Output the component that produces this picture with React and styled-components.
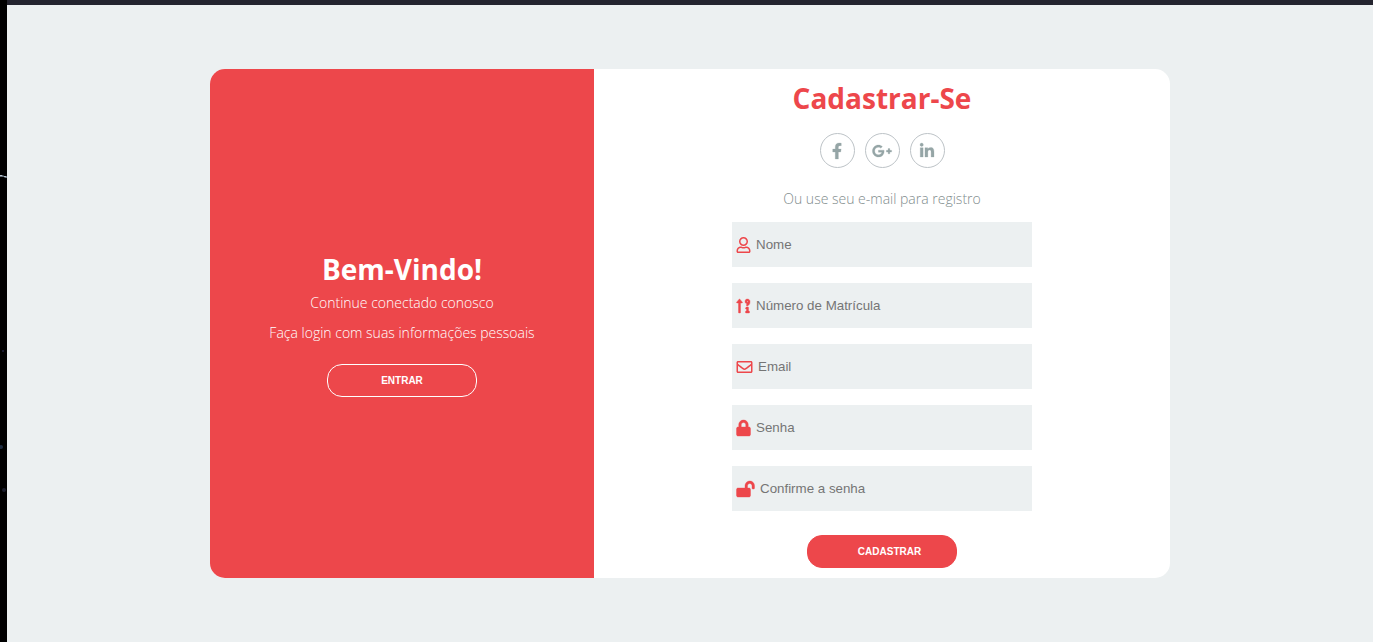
import React from "react";
import styled, { createGlobalStyle } from "styled-components";
import {
  FaFacebookF,
  FaGooglePlusG,
  FaLinkedinIn,
  FaRegUser,
  FaSortNumericUpAlt,
  FaRegEnvelope,
  FaLock,
  FaLockOpen,
} from "react-icons/fa";

const red = "#ed474b";
const mist = "#ecf0f1";

const GlobalStyle = createGlobalStyle`
  * { box-sizing: border-box; margin: 0; padding: 0; }
  body {
    background: #000;
    font-family: "Open Sans", sans-serif;
  }
`;

const Desktop = styled.div`
  display: flex;
  min-height: 100vh;
`;

const Backdrop = styled.svg`
  flex: none;
  width: 7px;
  height: 100vh;
`;

const Page = styled.main`
  flex: 1;
  display: flex;
  align-items: center;
  justify-content: center;
  border-top: 5px solid #24242f;
  background: ${mist};
`;

const Card = styled.div`
  display: flex;
  width: 100%;
  max-width: 960px;
  overflow: hidden;
  border-radius: 15px;
  background: #fff;
`;

const Column = styled.section`
  display: flex;
  flex-direction: column;
  align-items: center;
  justify-content: center;
  padding: 10px 0;
`;

const WelcomeColumn = styled(Column)`
  width: 40%;
  background: ${red};
`;

const FormColumn = styled(Column)`
  width: 60%;
`;

const Title = styled.h2`
  color: ${(p) => p.$color};
  font-size: 28px;
  font-weight: 700;
  line-height: 38px;
`;

const Description = styled.p`
  color: ${(p) => p.$color};
  font-size: 14px;
  font-weight: 300;
  line-height: 30px;
`;

const SocialList = styled.ul`
  display: flex;
  gap: 10px;
  margin: 16px 0;
  list-style: none;
`;

const SocialLink = styled.a`
  display: flex;
  align-items: center;
  justify-content: center;
  width: 35px;
  height: 35px;
  border: 1px solid #bdc3c7;
  border-radius: 50%;
  color: #95a5a6;
  font-size: 16px;

  svg {
    flex: none;
    width: ${(p) => p.$iconWidth}px;
    overflow: visible;
    stroke-width: 8;
  }
`;

const Form = styled.form`
  display: flex;
  flex-direction: column;
  align-items: center;
  gap: 16px;
  width: 100%;
  max-width: 300px;
  margin-top: 8px;
`;

const Field = styled.label`
  display: flex;
  align-items: center;
  gap: 5px;
  width: 100%;
  height: 45px;
  padding-left: 4px;
  background: ${mist};
  color: ${red};
  font-size: 16px;

  svg {
    flex: none;
    width: ${(p) => p.$iconWidth}px;
    overflow: visible;
    stroke-width: ${(p) => p.$stroke};
  }
`;

const Input = styled.input`
  flex: 1;
  min-width: 0;
  height: 45px;
  border: 0;
  outline: 0;
  background: transparent;
  font-family: "Liberation Sans", Arial, sans-serif;

  &::placeholder { color: #757575; }
`;

const Button = styled.button`
  width: 150px;
  height: 33px;
  border: 1px solid ${(p) => (p.$outlined ? "#fff" : red)};
  border-radius: 15px;
  background: ${red};
  color: #fff;
  font-family: "Liberation Sans", Arial, sans-serif;
  font-size: 10px;
  font-weight: 700;
  text-transform: uppercase;
  cursor: pointer;
`;

const SignInButton = styled(Button)`
  margin-top: 16px;
`;

const SignUpButton = styled(Button)`
  margin-top: 8px;
  padding-left: 15px;
`;

const socials = [
  { name: "Facebook", Icon: FaFacebookF, iconWidth: 10 },
  { name: "Google Plus", Icon: FaGooglePlusG, iconWidth: 20 },
  { name: "LinkedIn", Icon: FaLinkedinIn, iconWidth: 14 },
];

const fields = [
  { label: "Nome", type: "text", Icon: FaRegUser, iconWidth: 15, stroke: 0 },
  { label: "Número de Matrícula", type: "text", Icon: FaSortNumericUpAlt, iconWidth: 15, stroke: 12 },
  { label: "Email", type: "email", Icon: FaRegEnvelope, iconWidth: 17, stroke: 0 },
  { label: "Senha", type: "password", Icon: FaLock, iconWidth: 15, stroke: 12 },
  { label: "Confirme a senha", type: "password", Icon: FaLockOpen, iconWidth: 19, stroke: 12 },
];

export default function App() {
  return (
    <>
      <GlobalStyle />
      <Desktop>
        <Backdrop aria-hidden="true">
          <path d="M0 175h3l1 1h3v2H5l-1-1H0z" fill="#65717c" />
          <path d="M0 175h2v1H0zM4 176h2v1H4z" fill="#b9c4cf" />
          <circle cx="3" cy="351" r="1" fill="#20203c" />
          <circle cx="1" cy="447" r="2" fill="#1d2b40" />
          <circle cx="4" cy="490" r="2" fill="#1a1d2c" />
        </Backdrop>
        <Page>
          <Card>
            <WelcomeColumn>
              <Title $color="#fff">Bem-Vindo!</Title>
              <Description $color="#fff">Continue conectado conosco</Description>
              <Description $color="#fff">
                Faça login com suas informações pessoais
              </Description>
              <SignInButton type="button" $outlined>
                Entrar
              </SignInButton>
            </WelcomeColumn>
            <FormColumn>
              <Title $color={red}>Cadastrar-Se</Title>
              <SocialList>
                {socials.map(({ name, Icon, iconWidth }) => (
                  <li key={name}>
                    <SocialLink href="#" aria-label={name} $iconWidth={iconWidth}>
                      <Icon />
                    </SocialLink>
                  </li>
                ))}
              </SocialList>
              <Description $color="#7f8c8d">
                Ou use seu e-mail para registro
              </Description>
              <Form>
                {fields.map(({ label, type, Icon, iconWidth, stroke }) => (
                  <Field key={label} $iconWidth={iconWidth} $stroke={stroke}>
                    <Icon />
                    <Input type={type} placeholder={label} aria-label={label} />
                  </Field>
                ))}
                <SignUpButton type="submit">Cadastrar</SignUpButton>
              </Form>
            </FormColumn>
          </Card>
        </Page>
      </Desktop>
    </>
  );
}
